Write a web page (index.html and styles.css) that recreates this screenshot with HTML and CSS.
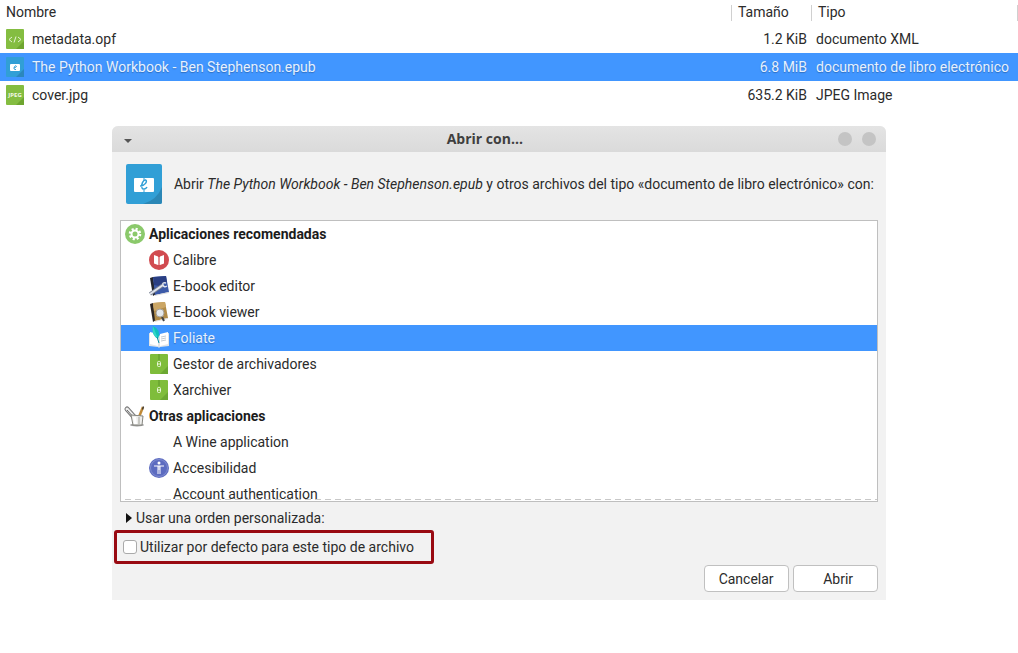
FILE: index.html
```html
<!DOCTYPE html>
<html lang="es">

<head>
    <meta charset="UTF-8">
    <meta name="viewport" content="width=device-width, initial-scale=1.0">
    <title>Abrir con...</title>
    <link rel="stylesheet" href="styles.css">
</head>

<body>
    <table class="files">
        <thead>
            <tr>
                <th class="col-name">Nombre</th>
                <th class="col-size">Tamaño</th>
                <th class="col-type">Tipo</th>
            </tr>
        </thead>
        <tbody>
            <tr>
                <td>
                    <div class="file">
                        <svg class="file-icon" viewBox="0 0 18 20">
                            <rect width="18" height="20" rx="1" fill="#84bd41" />
                            <path d="M18 12v8h-8z" fill="#6ea52f" />
                            <path d="M6 8l-3 2.500 3 2.500M12 8l3 2.500-3 2.500M10 7.500l-2 6" fill="none" stroke="#e6f3d4" />
                        </svg>
                        metadata.opf
                    </div>
                </td>
                <td class="size">1.2 KiB</td>
                <td class="type">documento XML</td>
            </tr>
            <tr class="selected">
                <td>
                    <div class="file">
                        <svg class="file-icon" viewBox="0 0 18 20">
                            <rect width="18" height="20" rx="1" fill="#319fd6" />
                            <path d="M18 12v8h-8z" fill="#2b87bd" />
                            <rect x="4" y="7" width="10" height="7" rx="1" fill="#fff" />
                            <path d="M8 11c4-1 2-3 1-2s-2 4 1 3.500" fill="none" stroke="#319fd6" />
                        </svg>
                        The Python Workbook - Ben Stephenson.epub
                    </div>
                </td>
                <td class="size">6.8 MiB</td>
                <td class="type">documento de libro electrónico</td>
            </tr>
            <tr>
                <td>
                    <div class="file">
                        <svg class="file-icon" viewBox="0 0 18 20">
                            <rect width="18" height="20" rx="1" fill="#84bd41" />
                            <path d="M18 12v8h-8z" fill="#6ea52f" />
                            <text x="9" y="12" class="icon-text">JPEG</text>
                        </svg>
                        cover.jpg
                    </div>
                </td>
                <td class="size">635.2 KiB</td>
                <td class="type">JPEG Image</td>
            </tr>
        </tbody>
    </table>

    <div class="dialog" role="dialog" aria-labelledby="dialogTitle">
        <div class="titlebar">
            <button type="button" class="menu-button" aria-label="Menú">
                <svg width="8" height="4" viewBox="0 0 8 4"><path d="M0 0h8L4 4z" fill="#555" /></svg>
            </button>
            <h1 id="dialogTitle">Abrir con...</h1>
            <div class="window-buttons">
                <button type="button" class="round" aria-label="Maximizar"></button>
                <button type="button" class="round" aria-label="Cerrar"></button>
            </div>
        </div>

        <div class="intro">
            <svg width="36" height="40" viewBox="0 0 36 40">
                <rect width="36" height="40" rx="2" fill="#319fd6" />
                <path d="M36 23v15q0 2-2 2H17q14-4 19-17z" fill="#2b87b6" />
                <rect x="8" y="14" width="20" height="14" rx="1" fill="#fff" />
                <path d="M18 13v3M18 26v3" stroke="#319fd6" />
                <path d="M14 22c5 0 8-5 5.500-6-2-.5-5 5-3.500 8 1 2 4 1 5-1" fill="none" stroke="#319fd6" stroke-width="1.500" />
            </svg>
            <p>Abrir <em>The Python Workbook - Ben Stephenson.epub</em> y otros archivos del tipo «documento de libro electrónico» con:</p>
        </div>

        <div class="app-box">
            <ul class="apps">
                <li class="group">
                    <svg class="icon" viewBox="0 0 20 20">
                        <circle cx="10" cy="10" r="10" fill="#8bc96b" />
                        <circle cx="10" cy="10" r="5" fill="none" stroke="#fff" stroke-width="2.600" stroke-dasharray="2 1.927" />
                        <circle cx="10" cy="10" r="3.500" fill="none" stroke="#fff" stroke-width="2" />
                    </svg>
                    Aplicaciones recomendadas
                </li>
                <li>
                    <svg class="icon" viewBox="0 0 20 20">
                        <circle cx="10" cy="10" r="10" fill="#d14b50" />
                        <path d="M5 5l4 1.500V15l-4-1.500zM15 5l-4 1.500V15l4-1.500z" fill="#fff" />
                        <path d="M10 7v8" stroke="#f7d5d6" />
                    </svg>
                    Calibre
                </li>
                <li>
                    <svg class="icon" viewBox="0 0 20 20">
                        <path d="M1 2l3-1 3 17-3 2z" fill="#23252d" />
                        <path d="M4 1l13-1 3 16-14 3z" fill="#3c5aa8" />
                        <path d="M4 1l13-1 1 6-8 4-5-1z" fill="#2a3f83" />
                        <path d="M6 19l14-3v1L5 20z" fill="#d9d9d9" />
                        <path d="M1 18L14 9" stroke="#777f91" stroke-width="3.500" />
                        <path d="M1 18L14 9" stroke="#dfe3eb" stroke-width="2" />
                        <path d="M17 7q-4-1-3 2 1 3 4 1" fill="none" stroke="#dfe3eb" stroke-width="1.500" />
                    </svg>
                    E-book editor
                </li>
                <li>
                    <svg class="icon" viewBox="0 0 20 20">
                        <path d="M1 2l3-1 3 17-3 2z" fill="#2b2522" />
                        <path d="M4 1l12-1 3 16-13 3z" fill="#b18b48" />
                        <path d="M4 1l12-1 1 5-12 4z" fill="#cba665" />
                        <path d="M6 19l13-3v1L5 20z" fill="#ddd" />
                        <path d="M13 15l2 4" stroke="#444" stroke-width="2" />
                        <circle cx="11" cy="11" r="4" fill="#e5e9ec" stroke="#a6a098" />
                    </svg>
                    E-book viewer
                </li>
                <li class="selected">
                    <svg class="icon" viewBox="0 0 20 20">
                        <path d="M0 5l9 2 1 1 1-1 9-2v13l-9 1-1 1-1-1-9-1z" fill="#e1e4e6" />
                        <path d="M1 4l8 2v12l-8-2zM19 4l-8 2v12l8-2z" fill="#fff" />
                        <path d="M12 9l5-1M12 11l5-1M12 13l5-1" stroke="#c4cbd1" />
                        <path d="M4-2q9 4 5 13-7-4-5-13z" fill="#0fc1bd" />
                        <path d="M4-2q-2 8 5 13z" fill="#35d6c8" />
                        <path d="M8 9l2 6" fill="none" stroke="#0a91a8" />
                    </svg>
                    Foliate
                </li>
                <li>
                    <svg class="icon" viewBox="0 0 20 20">
                        <rect x="1" width="18" height="20" rx="1" fill="#7fbd3b" />
                        <path d="M19 12v8h-8z" fill="#6ca832" />
                        <path d="M10 0v6" stroke="#5d952a" />
                        <rect x="8.500" y="7.500" width="3" height="5" rx="1" fill="none" stroke="#eaf6dc" />
                        <path d="M9 10h2" stroke="#eaf6dc" />
                    </svg>
                    Gestor de archivadores
                </li>
                <li>
                    <svg class="icon" viewBox="0 0 20 20">
                        <rect x="1" width="18" height="20" rx="1" fill="#7fbd3b" />
                        <path d="M19 12v8h-8z" fill="#6ca832" />
                        <path d="M10 0v6" stroke="#5d952a" />
                        <rect x="8.500" y="7.500" width="3" height="5" rx="1" fill="none" stroke="#eaf6dc" />
                        <path d="M9 10h2" stroke="#eaf6dc" />
                    </svg>
                    Xarchiver
                </li>
                <li class="group">
                    <svg class="icon" viewBox="0 0 20 20">
                        <ellipse cx="12" cy="19" rx="7" ry="1.500" fill="#999" />
                        <path d="M10 12L2 3" stroke="#777" stroke-width="5" stroke-linecap="round" />
                        <path d="M10 12L2 3" stroke="#eee" stroke-width="3" stroke-linecap="round" />
                        <path d="M9 12L2 4" stroke="#666" />
                        <path d="M14 11l4-10" stroke="#c08a38" stroke-width="2.500" />
                        <path d="M17 3l1-3 1 1-1 3z" fill="#333" />
                        <path d="M6 9l12 1-1 9H8z" fill="#eeeeec" stroke="#85857f" />
                        <path d="M8 11h3l1 7H9z" fill="#fff" />
                        <path d="M14 11v7" stroke="#c7c7c2" stroke-width="2" />
                    </svg>
                    Otras aplicaciones
                </li>
                <li>
                    <span class="icon"></span>
                    A Wine application
                </li>
                <li>
                    <svg class="icon" viewBox="0 0 20 20">
                        <circle cx="10" cy="10" r="10" fill="#5c6bc0" />
                        <circle cx="10" cy="10" r="8.500" fill="none" stroke="#7f8bd0" />
                        <circle cx="10" cy="5" r="1.500" fill="#fff" />
                        <path d="M5 8h10M9 8v8M11 8v8M10 8v4" stroke="#fff" />
                    </svg>
                    Accesibilidad
                </li>
                <li>
                    <span class="icon"></span>
                    Account authentication
                </li>
            </ul>
        </div>

        <details class="custom">
            <summary>
                <svg width="6" height="10" viewBox="0 0 6 10"><path d="M0 0l6 5-6 5z" fill="#111" /></svg>
                Usar una orden personalizada:
            </summary>
        </details>

        <div class="default-box">
            <input type="checkbox" id="useDefault" name="useDefault">
            <label for="useDefault">Utilizar por defecto para este tipo de archivo</label>
        </div>

        <div class="actions">
            <button type="button">Cancelar</button>
            <button type="button" class="open">Abrir</button>
        </div>
    </div>
</body>

</html>
```
FILE: styles.css
```css
body {
    font-family: Roboto, "Open Sans", sans-serif;
    font-size: 14px;
    line-height: 20px;
    margin: 0;
    color: #2b2b2b;
    background-color: #fff;
}

/* File list */

.files {
    width: 100%;
    table-layout: fixed;
    border-collapse: collapse;
}

.files th {
    box-sizing: border-box;
    height: 25px;
    padding: 0 6px 2px;
    font-weight: normal;
    text-align: left;
    background: linear-gradient(#d0d0d0, #d0d0d0) right center / 1px 16px no-repeat;
}

.files td {
    height: 28px;
    padding: 0 5px;
    white-space: nowrap;
}

.files .col-size {
    width: 80px;
}

.files .col-type {
    width: 206px;
}

.files .size {
    text-align: right;
}

.files .type {
    padding: 0 4px;
}

.file {
    display: flex;
    align-items: center;
    gap: 8px;
    padding-left: 1px;
}

.file-icon {
    width: 18px;
    height: 20px;
}

.icon-text {
    font: bold 6px "Open Sans", sans-serif;
    fill: #f2f9e8;
    text-anchor: middle;
}

.selected {
    color: #e6f1ff;
    background-color: #4196ff;
    text-shadow: 0 1px 1px #2f6fc0;
}

/* Dialog */

.dialog {
    width: 76%;
    margin: 17px 0 0 11%;
    padding-bottom: 8px;
    background-color: #f2f2f2;
    border-radius: 6px 6px 0 0;
}

.titlebar {
    display: flex;
    align-items: center;
    height: 26px;
    padding: 0 10px 0 12px;
    border-radius: 6px 6px 0 0;
    background: linear-gradient(#e4e4e4, #dadada);
}

.titlebar h1 {
    flex: 1;
    margin: 0;
    font: bold 14px/20px "Open Sans", sans-serif;
    text-align: center;
    color: #3f3f3f;
}

.menu-button {
    display: flex;
    padding: 4px 0 0;
    border: none;
    background: none;
}

.window-buttons {
    display: flex;
    gap: 10px;
}

.round {
    width: 14px;
    height: 14px;
    padding: 0;
    border: none;
    border-radius: 50%;
    background-color: #c4c4c4;
}

.intro {
    display: flex;
    align-items: center;
    gap: 12px;
    padding: 12px 6px 16px 14px;
}

.intro svg {
    flex: none;
}

.intro p {
    margin: 0;
}

.app-box {
    position: relative;
    height: 280px;
    margin: 0 8px;
    overflow: hidden;
    border: 1px solid #bfbfbf;
    background-color: #fff;
}

/* dashed edge: more rows below */
.app-box::after {
    content: "";
    position: absolute;
    left: 0;
    right: 0;
    bottom: 1px;
    height: 1px;
    background: repeating-linear-gradient(90deg, transparent 0 4px, #c8c8c8 4px 10px);
}

.apps {
    margin: 0;
    padding: 0;
    list-style: none;
}

.apps li {
    display: flex;
    align-items: center;
    gap: 4px;
    height: 26px;
    padding-left: 28px;
}

.apps .group {
    padding-left: 4px;
    font-weight: bold;
    color: #1c1c1c;
}

.icon {
    width: 20px;
    height: 20px;
    overflow: visible;
}

.custom {
    padding: 6px 14px 2px;
}

.custom summary {
    display: flex;
    align-items: center;
    gap: 4px;
    list-style: none;
}

.default-box {
    display: flex;
    align-items: center;
    gap: 3px;
    box-sizing: border-box;
    width: fit-content;
    min-width: 320px;
    height: 34px;
    margin-left: 2px;
    padding: 0 6px;
    border: 3px solid #990a12;
    border-radius: 3px;
}

.default-box input {
    appearance: none;
    width: 14px;
    height: 14px;
    margin: 0;
    border: 1px solid #aaa;
    border-radius: 3px;
    background-color: #fff;
}

.default-box input:checked {
    background-color: #4196ff;
}

.actions {
    display: flex;
    justify-content: flex-end;
    gap: 4px;
    padding: 1px 8px 0;
}

.actions button {
    width: 85px;
    height: 27px;
    padding: 0;
    font: inherit;
    color: inherit;
    border: 1px solid #c0c0c0;
    border-radius: 4px;
    background-color: #fff;
}

.actions .open {
    padding-left: 6px;
}
```
